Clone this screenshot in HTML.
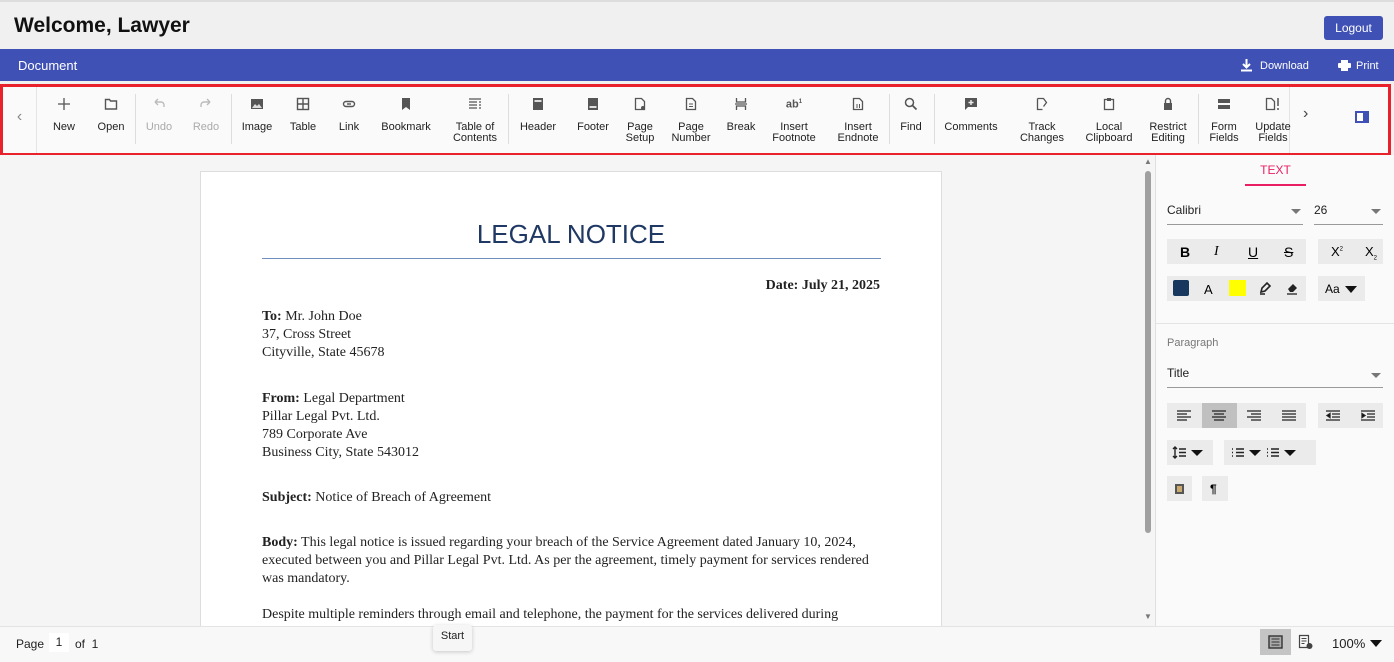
<!DOCTYPE html>
<html><head><meta charset="utf-8"><style>
*{box-sizing:border-box;margin:0;padding:0}
body{width:1394px;height:662px;overflow:hidden;font-family:"Liberation Sans",sans-serif;background:#f0f0f0;position:relative}
.abs{position:absolute}
.top{left:0;top:0;width:1394px;height:49px;background:#f0f0f0;border-top:2px solid #ddd}
.logout{left:1324px;top:16px;width:59px;height:24px;background:#3f51b5;color:#fff;border-radius:3px;font-size:12px;text-align:center;line-height:24px}
.bar{left:0;top:49px;width:1394px;height:32px;background:#3f51b5;color:#fff;font-size:13px}
.tb{left:0;top:84px;width:1391px;height:72px;border:3px solid #e8212b;background:#fafafa}
.it{position:absolute;top:0;width:80px;margin-left:-40px;text-align:center;font-size:11px;color:#222;line-height:11px}
.it .ic{height:14px;margin:10px auto 11px;display:flex;justify-content:center}
.it.dis{color:#aaa}
.sep{position:absolute;top:7px;width:1px;height:50px;background:#ddd}
.main{left:0;top:155px;width:1155px;height:471px;background:#f5f5f5}
.page{left:200px;top:171px;width:742px;height:460px;background:#fff;border:1px solid #ddd;font-family:"Liberation Serif",serif;font-size:14px;color:#222}
.page p{position:absolute;left:61px;line-height:18px;white-space:nowrap}
.rp{left:1155px;top:155px;width:239px;height:471px;background:#fafafa;border-left:1px solid #e0e0e0}
.btn{position:absolute;background:#ebebeb;height:25px}
.sel{position:absolute;border-bottom:1px solid #999;font-size:12px;color:#222;height:22px}
.sel i{position:absolute;right:2px;top:4px;width:0;height:0;border-left:5px solid transparent;border-right:5px solid transparent;border-top:5px solid #777}
.foot{left:0;top:626px;width:1394px;height:36px;background:#f8f8f8;border-top:1px solid #e4e4e4;font-size:12px;color:#222}
</style></head><body>
<div class="abs top"><div class="abs" style="left:14px;top:12px;font-size:21px;font-weight:bold;color:#111">Welcome, Lawyer</div></div>
<div class="abs logout">Logout</div>
<div class="abs bar"><span class="abs" style="left:18px;top:9px">Document</span>
<svg class="abs" style="left:1240px;top:9px" width="13" height="14"><path d="M6.5 1v8M3 6l3.5 3.5L10 6M1 12.5h11" stroke="#fff" stroke-width="2" fill="none"/></svg>
<span class="abs" style="left:1260px;top:11px;font-size:11px">Download</span>
<svg class="abs" style="left:1338px;top:11px" width="13" height="11"><rect x="3" y="0" width="7" height="3" fill="#fff"/><rect x="0" y="3" width="13" height="5" rx="1" fill="#fff"/><rect x="3" y="7" width="7" height="4" fill="#fff"/></svg>
<span class="abs" style="left:1356px;top:11px;font-size:11px">Print</span></div>

<div class="abs tb">
<div class="abs" style="left:0;top:0;width:34px;height:66px;border-right:1px solid #e4e4e4;color:#888;font-size:16px;text-align:center;line-height:60px">‹</div>
<div class="sep" style="left:132px"></div><div class="sep" style="left:228px"></div><div class="sep" style="left:505px"></div><div class="sep" style="left:886px"></div><div class="sep" style="left:931px"></div><div class="sep" style="left:1195px"></div>
<div class="abs" style="left:1286px;top:0;width:1px;height:66px;background:#e4e4e4"></div>
<div class="abs" style="left:1300px;top:18px;font-size:16px;color:#444">›</div>
<div class="abs" style="left:1352px;top:24px;width:14px;height:12px;border:2px solid #3f51b5;border-right-width:6px;background:#fff"></div>
<div class="it" style="left:61px"><div class="ic"><svg width="14" height="14"><path d="M7 1v12M1 7h12" stroke="#555" stroke-width="1.3"/></svg></div>New</div>
<div class="it" style="left:108px"><div class="ic"><svg width="14" height="14"><path d="M1.5 2.5h4l1 1.5h6v8h-11z" stroke="#555" stroke-width="1.4" fill="none"/></svg></div>Open</div>
<div class="it dis" style="left:156px"><div class="ic"><svg width="14" height="14"><path d="M3 5h6a3 3 0 0 1 3 3v2M3 5l3-3M3 5l3 3" stroke="#bbb" stroke-width="1.4" fill="none"/></svg></div>Undo</div>
<div class="it dis" style="left:203px"><div class="ic"><svg width="14" height="14"><path d="M11 5H5a3 3 0 0 0-3 3v2M11 5L8 2M11 5L8 8" stroke="#bbb" stroke-width="1.4" fill="none"/></svg></div>Redo</div>
<div class="it" style="left:254px"><div class="ic"><svg width="14" height="14"><rect x="1" y="2" width="12" height="10" fill="#555"/><path d="M2 11l3-4 2 2 2-2 3 4z" fill="#ddd"/></svg></div>Image</div>
<div class="it" style="left:300px"><div class="ic"><svg width="14" height="14"><rect x="1.5" y="1.5" width="11" height="11" stroke="#555" stroke-width="1.4" fill="none"/><path d="M7 1v12M1 7h12" stroke="#555" stroke-width="1.4"/></svg></div>Table</div>
<div class="it" style="left:346px"><div class="ic"><svg width="14" height="14"><rect x="1.5" y="4.5" width="11" height="5" rx="2.5" stroke="#555" stroke-width="1.4" fill="none"/><path d="M5 7h4" stroke="#555" stroke-width="1.4"/></svg></div>Link</div>
<div class="it" style="left:403px"><div class="ic"><svg width="14" height="14"><path d="M3 1h8v12l-4-3-4 3z" fill="#555"/></svg></div>Bookmark</div>
<div class="it" style="left:472px"><div class="ic"><svg width="14" height="14"><path d="M1 2h12M1 5h8M11 5h2M1 8h8M11 8h2M1 11h8M11 11h2" stroke="#555" stroke-width="1.3"/></svg></div>Table of<br>Contents</div>
<div class="it" style="left:535px"><div class="ic"><svg width="14" height="14"><rect x="2" y="1" width="10" height="12" fill="#555"/><rect x="3.5" y="3" width="7" height="2" fill="#ddd"/></svg></div>Header</div>
<div class="it" style="left:590px"><div class="ic"><svg width="14" height="14"><rect x="2" y="1" width="10" height="12" fill="#555"/><rect x="3.5" y="9" width="7" height="2" fill="#ddd"/></svg></div>Footer</div>
<div class="it" style="left:637px"><div class="ic"><svg width="14" height="14"><path d="M2.5 1.5h6l3 3v8h-9z" stroke="#555" stroke-width="1.3" fill="none"/><circle cx="10" cy="11" r="2" fill="#555"/></svg></div>Page<br>Setup</div>
<div class="it" style="left:688px"><div class="ic"><svg width="14" height="14"><path d="M2.5 1.5h6l3 3v8h-9z" stroke="#555" stroke-width="1.3" fill="none"/><path d="M5 7h4M5 9.5h4" stroke="#555"/></svg></div>Page<br>Number</div>
<div class="it" style="left:738px"><div class="ic"><svg width="14" height="14"><path d="M2.5 1v4h9V1M2.5 13V9h9v4M1 7h12" stroke="#555" stroke-width="1.3" fill="none"/></svg></div>Break</div>
<div class="it" style="left:791px"><div class="ic"><span style="font-size:11px;color:#555;font-weight:bold">ab<sup style="font-size:6px">1</sup></span></div>Insert<br>Footnote</div>
<div class="it" style="left:855px"><div class="ic"><svg width="14" height="14"><path d="M2.5 1.5h6l3 3v8h-9z" stroke="#555" stroke-width="1.3" fill="none"/><path d="M6 7v4M8.5 7v4" stroke="#555"/></svg></div>Insert<br>Endnote</div>
<div class="it" style="left:908px"><div class="ic"><svg width="14" height="14"><circle cx="5.5" cy="5.5" r="4" stroke="#555" stroke-width="1.5" fill="none"/><path d="M8.5 8.5l4 4" stroke="#555" stroke-width="1.8"/></svg></div>Find</div>
<div class="it" style="left:968px"><div class="ic"><svg width="14" height="14"><path d="M1 1h12v9H4l-3 3z" fill="#555"/><path d="M7 3v5M4.5 5.5h5" stroke="#eee" stroke-width="1.4"/></svg></div>Comments</div>
<div class="it" style="left:1039px"><div class="ic"><svg width="14" height="14"><path d="M2.5 1.5h6l3 4-3 4 M2.5 1.5v11h5" stroke="#555" stroke-width="1.3" fill="none"/></svg></div>Track<br>Changes</div>
<div class="it" style="left:1106px"><div class="ic"><svg width="14" height="14"><rect x="2.5" y="2.5" width="9" height="10" stroke="#555" stroke-width="1.3" fill="none"/><rect x="5" y="1" width="4" height="3" fill="#555"/></svg></div>Local<br>Clipboard</div>
<div class="it" style="left:1165px"><div class="ic"><svg width="14" height="14"><path d="M4.5 6V4a2.5 2.5 0 0 1 5 0v2" stroke="#555" stroke-width="1.4" fill="none"/><rect x="3" y="6" width="8" height="7" fill="#555"/></svg></div>Restrict<br>Editing</div>
<div class="it" style="left:1221px"><div class="ic"><svg width="14" height="14"><rect x="1" y="2" width="12" height="4" fill="#555"/><rect x="1" y="8" width="12" height="4" fill="#555"/></svg></div>Form<br>Fields</div>
<div class="it" style="left:1270px;width:40px;margin-left:-20px;overflow:hidden"><div class="ic"><svg width="16" height="14"><path d="M1.5 1.5h5l3 3v8h-8z" stroke="#555" stroke-width="1.3" fill="none"/><path d="M13 1v8M13 11v2" stroke="#555" stroke-width="1.5"/></svg></div>Update<br>Fields</div>
</div>

<div class="abs main"></div>
<div class="abs page">
<div class="abs" style="left:0;top:47px;width:740px;text-align:center;font-family:'Liberation Sans Narrow','Liberation Sans',sans-serif;font-size:26px;color:#1f3864">LEGAL NOTICE</div>
<div class="abs" style="left:61px;top:86px;width:619px;height:1px;background:#6f8fbf"></div>
<p style="top:105px;left:auto;right:61px;font-weight:bold">Date: July 21, 2025</p>
<p style="top:136px"><b>To:</b> Mr. John Doe<br>37, Cross Street<br>Cityville, State 45678</p>
<p style="top:218px"><b>From:</b> Legal Department<br>Pillar Legal Pvt. Ltd.<br>789 Corporate Ave<br>Business City, State 543012</p>
<p style="top:317px"><b>Subject:</b> Notice of Breach of Agreement</p>
<p style="top:362px"><b>Body:</b> This legal notice is issued regarding your breach of the Service Agreement dated January 10, 2024,<br>executed between you and Pillar Legal Pvt. Ltd. As per the agreement, timely payment for services rendered<br>was mandatory.</p>
<p style="top:434px">Despite multiple reminders through email and telephone, the payment for the services delivered during</p>
</div>
<div class="abs" style="left:1143px;top:157px;width:10px;height:469px;background:#f5f5f5">
<div class="abs" style="left:1px;top:0;font-size:8px;color:#777">▲</div>
<div class="abs" style="left:2px;top:14px;width:6px;height:362px;background:#a0a0a0;border-radius:3px"></div>
<div class="abs" style="left:1px;top:455px;font-size:8px;color:#777">▼</div></div>

<div class="abs rp">
<div class="abs" style="left:89px;top:8px;width:61px;text-align:center;font-size:12px;color:#e91e63">TEXT</div>
<div class="abs" style="left:89px;top:29px;width:61px;height:2px;background:#e91e63"></div>
<div class="sel" style="left:11px;top:48px;width:136px">Calibri<i style="top:6px"></i></div>
<div class="sel" style="left:158px;top:48px;width:69px">26<i style="top:6px"></i></div>
<div class="btn" style="left:11px;top:84px;width:139px"></div>
<div class="btn" style="left:162px;top:84px;width:65px"></div>
<div class="abs" style="left:24px;top:89px;font-size:14px;font-weight:bold">B</div>
<div class="abs" style="left:58px;top:89px;font-size:14px;font-style:italic;font-family:'Liberation Serif',serif">I</div>
<div class="abs" style="left:92px;top:89px;font-size:14px;text-decoration:underline">U</div>
<div class="abs" style="left:128px;top:89px;font-size:14px;text-decoration:line-through">S</div>
<div class="abs" style="left:175px;top:89px;font-size:13px">X<sup style="font-size:6px">2</sup></div>
<div class="abs" style="left:209px;top:89px;font-size:13px">X<sub style="font-size:6px">2</sub></div>
<div class="btn" style="left:11px;top:121px;width:139px"></div>
<div class="btn" style="left:162px;top:121px;width:47px"></div>
<div class="abs" style="left:17px;top:125px;width:16px;height:16px;background:#17375e;border-radius:2px"></div>
<div class="abs" style="left:48px;top:127px;font-size:13px">A</div>
<div class="abs" style="left:73px;top:125px;width:17px;height:16px;background:#ff0"></div>
<svg class="abs" style="left:102px;top:126px" width="14" height="14"><path d="M3 11l1-4 5-5 3 3-5 5z" stroke="#222" stroke-width="1.6" fill="none"/><path d="M2 13h5" stroke="#222" stroke-width="1.5"/></svg>
<svg class="abs" style="left:129px;top:126px" width="14" height="14"><path d="M3 8l5-5 4 4-4 4H5z" fill="#222"/><path d="M2 13h10" stroke="#222" stroke-width="1.3"/></svg>
<div class="abs" style="left:169px;top:127px;font-size:12px">Aa</div>
<div class="abs" style="left:189px;top:131px;border-left:6px solid transparent;border-right:6px solid transparent;border-top:7px solid #111"></div>
<div class="abs" style="left:0;top:168px;width:239px;height:1px;background:#e4e4e4"></div>
<div class="abs" style="left:11px;top:182px;font-size:11px;color:#777">Paragraph</div>
<div class="sel" style="left:11px;top:211px;width:216px">Title<i style="top:7px"></i></div>
<div class="btn" style="left:11px;top:248px;width:139px"></div>
<div class="abs" style="left:46px;top:248px;width:35px;height:25px;background:#c0c0c0"></div>
<div class="btn" style="left:162px;top:248px;width:65px"></div>
<svg class="abs" style="left:11px;top:248px" width="216" height="25" stroke="#222" stroke-width="1.3">
<path d="M10 8h14M10 11h10M10 14h14M10 17h10"/>
<path d="M45 8h14M47 11h10M45 14h14M47 17h10"/>
<path d="M80 8h14M84 11h10M80 14h14M84 17h10"/>
<path d="M115 8h14M115 11h14M115 14h14M115 17h14"/>
<path d="M159 8h14M165 11h8M165 14h8M159 17h14M163 10.5l-3 2 3 2z"/>
<path d="M194 8h14M200 11h8M200 14h8M194 17h14M195 10.5l3 2-3 2z"/>
</svg>
<div class="btn" style="left:11px;top:285px;width:46px"></div>
<div class="btn" style="left:68px;top:285px;width:92px"></div>
<svg class="abs" style="left:11px;top:285px" width="150" height="25" stroke="#222" stroke-width="1.4" fill="#111">
<path d="M8 7v11M6 9l2-2 2 2M6 16l2 2 2-2M12 9h7M12 12.5h7M12 16h7" fill="none"/>
<path d="M24 10l6 6 6-6z" stroke="none"/>
<path d="M65 9h1M65 12.5h1M65 16h1M69 9h8M69 12.5h8M69 16h8" fill="none"/>
<path d="M82 10l6 6 6-6z" stroke="none"/>
<path d="M100 9h1M100 12.5h1M100 16h1M104 9h8M104 12.5h8M104 16h8" fill="none"/>
<path d="M117 10l6 6 6-6z" stroke="none"/>
</svg>
<div class="btn" style="left:11px;top:321px;width:25px"></div>
<div class="btn" style="left:46px;top:321px;width:26px"></div>
<div class="abs" style="left:19px;top:329px;width:9px;height:10px;border:2px solid #555;background:#c9a96e"></div>
<div class="abs" style="left:54px;top:327px;font-size:12px;font-weight:bold">¶</div>
</div>

<div class="abs foot">
<span class="abs" style="left:16px;top:10px">Page</span>
<span class="abs" style="left:49px;top:6px;width:20px;height:19px;background:#fff;text-align:center;line-height:19px">1</span>
<span class="abs" style="left:75px;top:10px">of&nbsp; 1</span>
<div class="abs" style="left:433px;top:-2px;width:39px;height:26px;background:#f6f6f6;box-shadow:0 1px 4px rgba(0,0,0,.2);border-radius:3px;font-size:11px;text-align:center;line-height:22px">Start</div>
<div class="abs" style="left:1260px;top:2px;width:31px;height:26px;background:#c4c4c4"></div>
<svg class="abs" style="left:1268px;top:8px" width="15" height="14"><rect x="1" y="1" width="13" height="12" stroke="#333" stroke-width="1.4" fill="#aaa"/><path d="M3.5 4h8M3.5 7h8M3.5 10h8" stroke="#333"/></svg>
<svg class="abs" style="left:1298px;top:7px" width="16" height="16"><path d="M1.5 1.5h9v12h-9z" stroke="#444" stroke-width="1.2" fill="none"/><path d="M3.5 4.5h5M3.5 7h5M3.5 9.5h3" stroke="#444"/><circle cx="11.5" cy="12" r="3" fill="#444"/></svg>
<span class="abs" style="left:1332px;top:9px;font-size:13px">100%</span>
<div class="abs" style="left:1370px;top:13px;border-left:6px solid transparent;border-right:6px solid transparent;border-top:7px solid #111"></div>
</div>
</body></html>
